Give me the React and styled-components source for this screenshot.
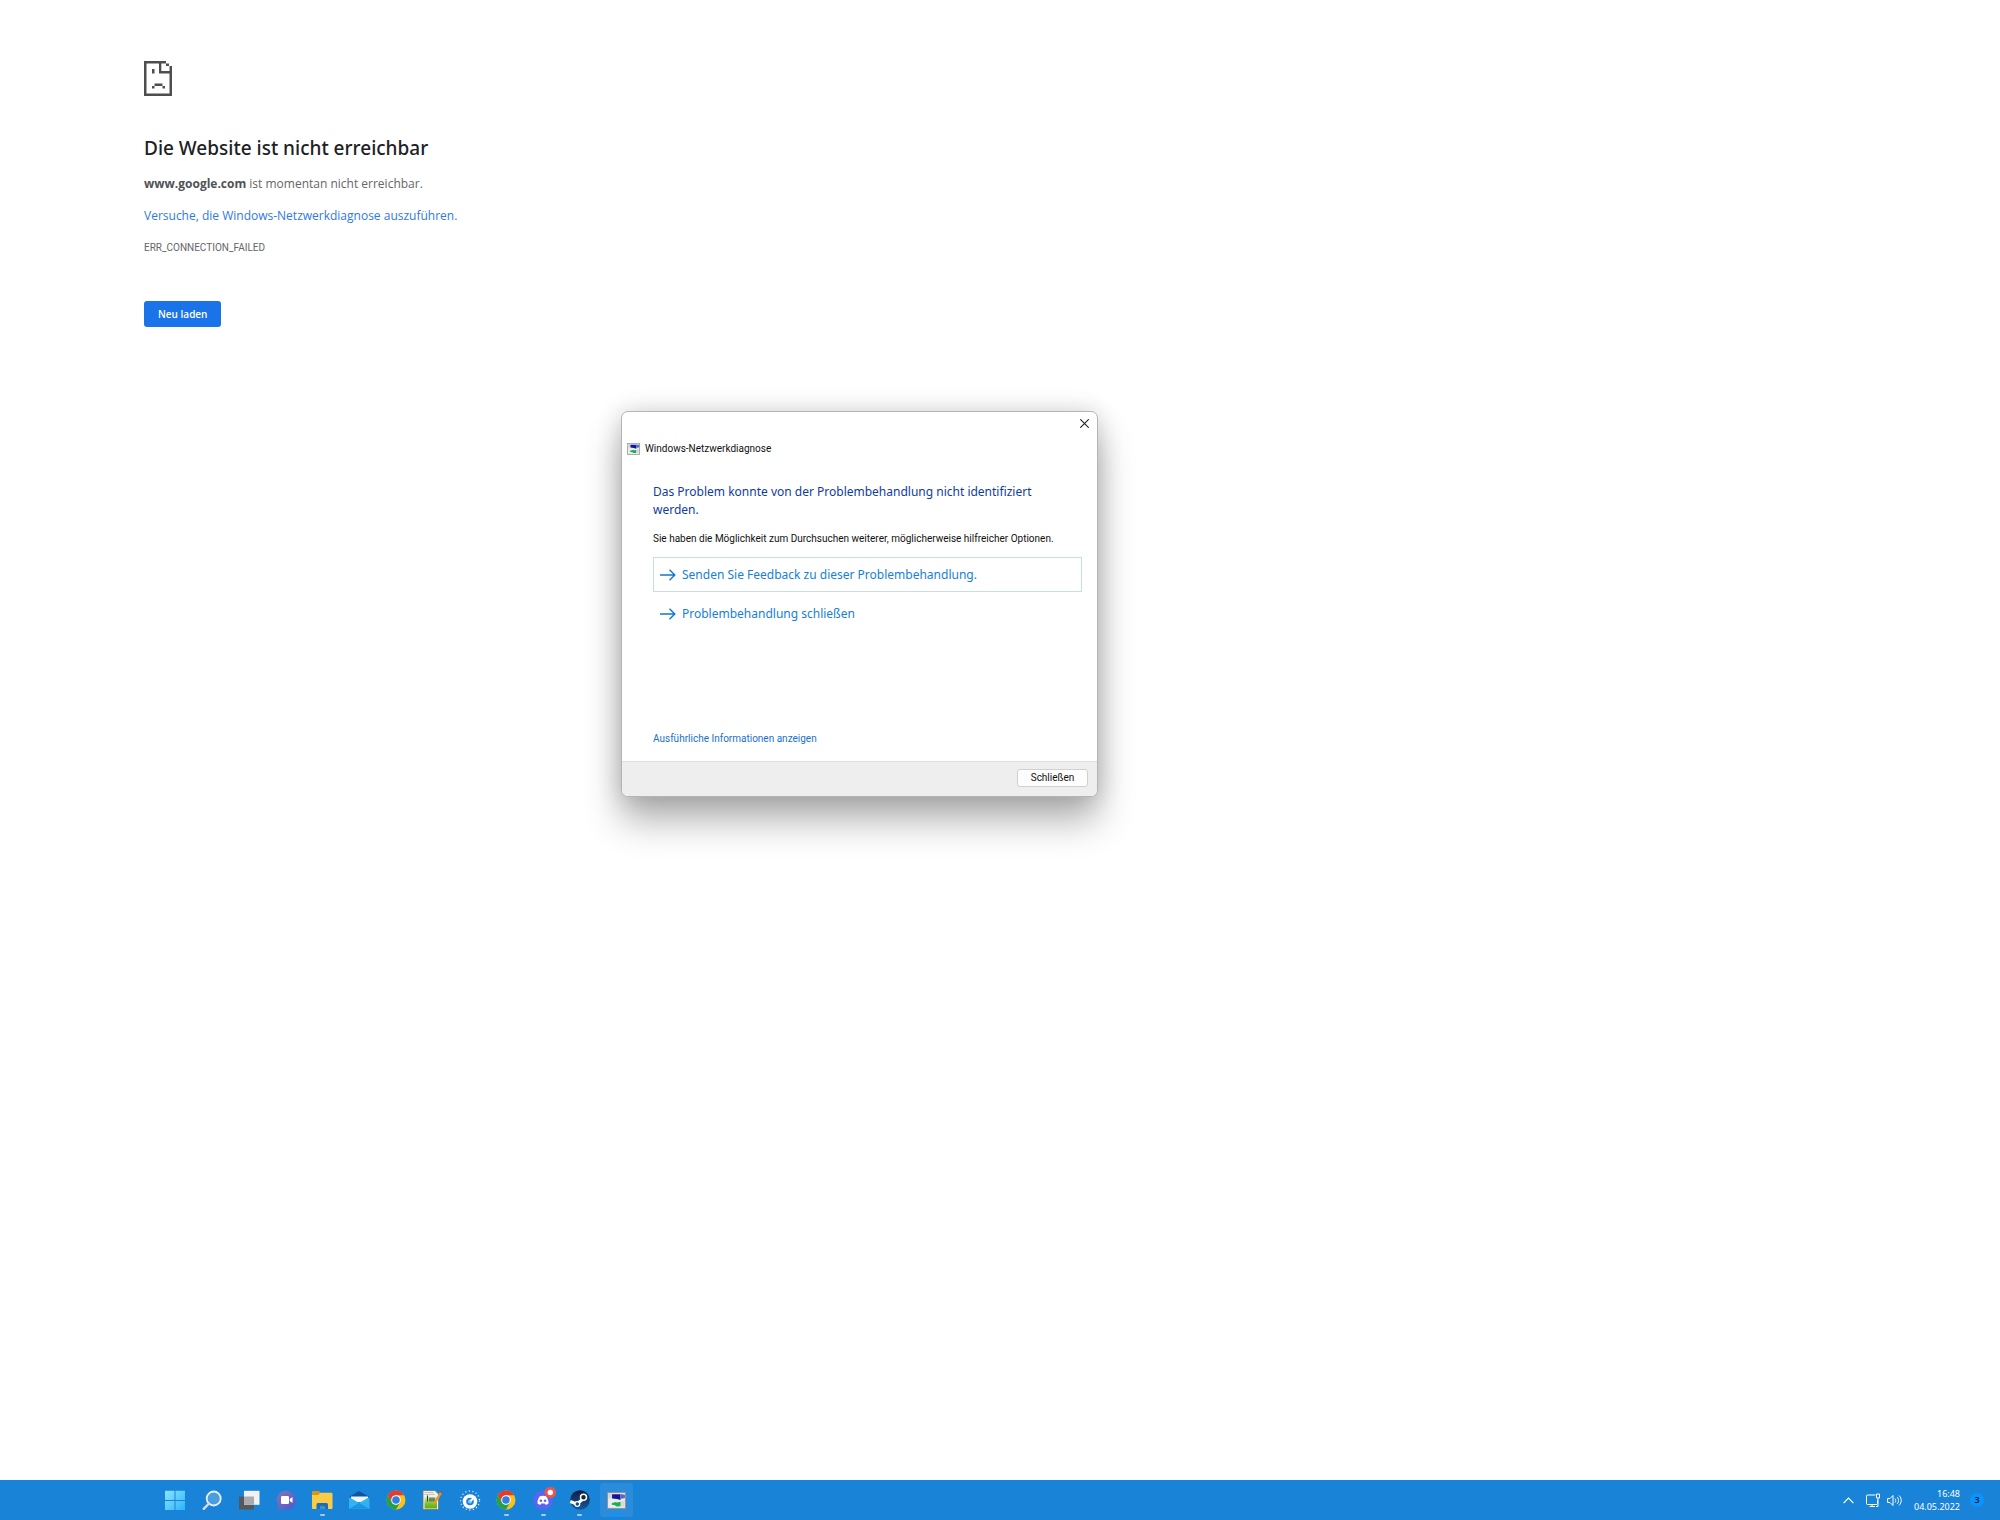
import React, { useState } from "react";
import styled, { createGlobalStyle } from "styled-components";

const GlobalStyle = createGlobalStyle`
  *, *::before, *::after { box-sizing: border-box; }
  body {
    margin: 0;
    background: #fff;
    font-family: "Open Sans", "Noto Sans", sans-serif;
  }
  h1, h2, p { margin: 0; }
  button { font-family: inherit; cursor: pointer; }
  a { text-decoration: none; }
`;

const Desktop = styled.div`
  min-height: 100vh;
  display: flex;
  flex-direction: column;
  position: relative;
`;

/* ---------- browser error page ---------- */

const ErrorPage = styled.main`
  flex: 1;
  display: flex;
  flex-direction: column;
  align-items: flex-start;
  padding: 61px 144px;
`;

const SadPage = styled.svg`
  width: 28px;
  height: 35px;
  margin-bottom: 38px;
`;

const ErrorTitle = styled.h1`
  font-family: "Noto Sans", sans-serif;
  font-size: 19px;
  line-height: 28px;
  font-weight: 500;
  color: #202124;
  margin-bottom: 12px;
`;

const ErrorText = styled.p`
  font-size: 12px;
  line-height: 20px;
  color: #646669;
  margin-bottom: 12px;

  strong { color: #505256; }
`;

const DiagnoseLink = styled.a`
  color: #2f78e8;
`;

const ErrorCode = styled.p`
  font-family: Roboto, "Noto Sans", sans-serif;
  font-size: 10px;
  line-height: 20px;
  color: #646669;
  margin-bottom: 43px;
`;

const ReloadButton = styled.button`
  height: 26px;
  padding: 0 14px;
  border: 0;
  border-radius: 3px;
  background: #1a73e8;
  color: #fff;
  font-size: 10px;
  font-weight: 600;
  line-height: 16px;
`;

/* ---------- diagnosis window ---------- */

const Dialog = styled.section`
  position: absolute;
  top: 411px;
  left: 621px;
  width: 477px;
  min-height: 386px;
  display: flex;
  flex-direction: column;
  border: 1px solid #b4b4b4;
  border-radius: 7px;
  background: #fff;
  font-family: Roboto, "Noto Sans", sans-serif;
  font-size: 10px;
  line-height: 16px;
  overflow: hidden;
  box-shadow: 0 24px 36px rgba(0, 0, 0, 0.3), 0 0 24px rgba(0, 0, 0, 0.16);
`;

const TitleBar = styled.div`
  display: flex;
  justify-content: flex-end;
`;

const CloseButton = styled.button`
  display: flex;
  align-items: center;
  justify-content: center;
  width: 26px;
  height: 23px;
  padding: 0;
  border: 0;
  background: transparent;
`;

const DialogCaption = styled.div`
  display: flex;
  align-items: center;
  gap: 5px;
  height: 28px;
  padding: 0 5px;
  color: #111;
`;

const DialogBody = styled.div`
  flex: 1;
  display: flex;
  flex-direction: column;
  align-items: flex-start;
  padding: 20px 15px 14px 31px;
`;

const DialogHeading = styled.h2`
  padding-right: 24px;
  font-family: "Noto Sans", sans-serif;
  font-size: 12px;
  line-height: 18px;
  font-weight: 400;
  color: #0f3c9e;
  margin-bottom: 12px;
`;

const DialogText = styled.p`
  color: #111;
  margin-bottom: 10px;
`;

const Command = styled.button`
  display: flex;
  align-items: center;
  gap: 6px;
  width: 100%;
  height: 35px;
  padding: 0 6px;
  margin-bottom: 4px;
  border: 1px solid ${(p) => (p.$focused ? "#c5ddf3" : "transparent")};
  background: transparent;
  color: #1580d8;
  font-family: "Noto Sans", sans-serif;
  font-size: 12px;
  line-height: 18px;
  text-align: left;
`;

const DetailsLink = styled.a`
  margin-top: auto;
  color: #1a6fd0;
`;

const DialogFooter = styled.footer`
  display: flex;
  justify-content: flex-end;
  padding: 7px 9px 9px;
  border-top: 1px solid #dfdfdf;
  background: #eee;
`;

const FooterButton = styled.button`
  width: 71px;
  height: 18px;
  padding: 0;
  border: 1px solid #d0d0d0;
  border-radius: 3px;
  background: #fdfdfd;
  color: #111;
  font-size: 10px;
  line-height: 16px;
`;

/* ---------- taskbar ---------- */

const Taskbar = styled.nav`
  display: flex;
  align-items: center;
  justify-content: space-between;
  height: 40px;
  padding: 0 16px 0 157px;
  background: #1883d7;
`;

const AppStrip = styled.div`
  display: grid;
  grid-template-columns: repeat(13, 1fr);
  width: 478px;
`;

const AppButton = styled.button`
  position: relative;
  display: flex;
  align-items: center;
  justify-content: center;
  height: 34px;
  margin: 0 2px;
  padding: 0;
  border: 0;
  border-radius: 3px;
  background: ${(p) => (p.$active ? "#2a8cdb" : "transparent")};

  &::after {
    content: "";
    display: ${(p) => (p.$running || p.$active ? "block" : "none")};
    position: absolute;
    bottom: 1px;
    width: ${(p) => (p.$active ? "13px" : "5px")};
    height: 2px;
    border-radius: 1px;
    background: ${(p) => (p.$active ? "#0a94ff" : "#a5cdef")};
  }
`;

const AppIcon = styled.svg`
  width: 22px;
  height: 22px;
  overflow: visible;
`;

const Tray = styled.div`
  display: flex;
  align-items: center;
  color: #fff;
`;

const TrayButton = styled.button`
  display: flex;
  padding: 0;
  margin-right: ${(p) => p.$gap}px;
  border: 0;
  background: transparent;
  color: inherit;
`;

const Clock = styled.time`
  display: flex;
  flex-direction: column;
  align-items: flex-end;
  margin-right: 10px;
  font-family: "Noto Sans", sans-serif;
  font-size: 9px;
  line-height: 13px;
`;

const CountBadge = styled.span`
  display: flex;
  align-items: center;
  justify-content: center;
  width: 14px;
  height: 14px;
  border-radius: 50%;
  background: #0a94ff;
  color: #06182c;
  font-size: 9px;
  font-weight: 600;
  line-height: 12px;
`;

/* ---------- drawings ---------- */

const SadPageIcon = () => (
  <SadPage viewBox="0 0 28 35" fill="#4c4e50" aria-hidden="true">
    <path d="M0 0h22v2.500H2.500v30h23V12.500H15V2.500h2.300V10h8.200V5H28v30H0zM22 2.500h3V5h-3zM8 8h2.500v4.500H8zM10.500 22.500h8V25h-8zM8 25h2.500v2.500H8zM18.500 25H21v2.500h-2.500z" />
  </SadPage>
);

const ArrowIcon = () => (
  <svg width="16" height="14" viewBox="0 0 16 14" fill="none" stroke="#1178cf" strokeWidth="1.4" aria-hidden="true">
    <path d="M0 7h14.5M9.5 1.8 14.8 7l-5.300 5.200" />
  </svg>
);

const DiagnoseGlyph = ({ width, height }) => (
  <svg width={width} height={height} viewBox="0 0 18 16" aria-hidden="true">
    <rect x=".5" y=".5" width="17" height="15" fill="#ecebea" stroke="#8f9499" />
    <path d="M1 1h4v5H1z" fill="#d3d6da" />
    <path d="M4.800 2h8v5.500L9.500 6.500 4.800 6z" fill="#10169a" />
    <path d="M12.800 1.800 17 2.500v3.200l-4.200.8z" fill="#5568cc" />
    <path d="m4.500 10.500 3.500-1 1.500.4 3.500-.6v4.200l-4 .2-1.500-1.200-3-.4z" fill="#16b352" />
    <path d="M13 8.500h3.500v5H13z" fill="#d5dcd8" />
  </svg>
);

const StartIcon = () => (
  <AppIcon viewBox="0 0 22 22">
    <defs>
      <linearGradient id="start" x1="0" y1="0" x2="1" y2="1">
        <stop offset="0" stopColor="#8fe3ff" />
        <stop offset="1" stopColor="#2bb4fb" />
      </linearGradient>
    </defs>
    <path fill="url(#start)" d="M1 1.800h9.500v9.200H1zM11.500 1.800H21v9.200h-9.500zM1 12h9.500v9H1zM11.500 12H21v9h-9.500z" />
  </AppIcon>
);

const SearchIcon = () => (
  <AppIcon viewBox="0 0 22 22" fill="none">
    <circle cx="12.700" cy="9.500" r="7" fill="#4a9ee0" stroke="#e9eef2" strokeWidth="1.800" />
    <path d="m8 14.500-5.300 5.300" stroke="#d5dce2" strokeWidth="2.400" strokeLinecap="round" />
  </AppIcon>
);

const TaskViewIcon = () => (
  <AppIcon viewBox="0 0 22 22">
    <path d="M1 7.500h15V20.500H1z" fill="#55585b" />
    <path d="M6 1.800h15.500v14H6z" fill="#f1f2f3" />
    <path d="M6 7.500h10v8.300H6z" fill="#a9acaf" />
  </AppIcon>
);

const ChatIcon = () => (
  <AppIcon viewBox="0 0 22 22">
    <defs>
      <linearGradient id="chat" x1="0" y1="0" x2="1" y2="1">
        <stop offset="0" stopColor="#8277b8" />
        <stop offset="1" stopColor="#5055cf" />
      </linearGradient>
    </defs>
    <path d="M11.500 1.800a9.400 9.400 0 1 1-4 17.900L2 21l1-5a9.400 9.400 0 0 1 8.500-14.200z" fill="url(#chat)" />
    <rect x="6" y="7" width="8" height="8" rx="1.200" fill="#fff" />
    <path d="m14.700 10 2.800-2v6l-2.800-2z" fill="#fff" />
  </AppIcon>
);

const ExplorerIcon = () => (
  <AppIcon viewBox="0 0 22 22">
    <path d="M1 3a1 1 0 0 1 1-1h6l2 2.500h-2L7 7H1z" fill="#d89614" />
    <path d="M9 3.800h11.500a1 1 0 0 1 1 1V19a1 1 0 0 1-1 1H2a1 1 0 0 1-1-1V6h6z" fill="#fbcb45" />
    <path d="M5.500 20v-4.500a1.500 1.500 0 0 1 1.500-1.500h8.500a1.500 1.500 0 0 1 1.500 1.500V20h-3.500v-2H9v2z" fill="#1a6fb8" />
    <path d="M9 17h4.500v3H9z" fill="#3d8fd0" />
  </AppIcon>
);

const MailIcon = () => (
  <AppIcon viewBox="0 0 22 22">
    <path d="M1 8 11 2l10.500 6v3H1z" fill="#0f549f" />
    <path d="M3 7.500h17V13H3z" fill="#eef5fa" />
    <path d="M1 8v11a1 1 0 0 0 1 1h18.500a1 1 0 0 0 1-1V8L11 14z" fill="#2fb3f2" />
    <path d="M1.300 19.800 11 14l10.200 5.800z" fill="#1b94e4" />
  </AppIcon>
);

const ChromeIcon = () => (
  <AppIcon viewBox="0 0 22 22">
    <circle cx="11" cy="11" r="9.500" fill="#fbc116" />
    <path d="M2.770 6.250A9.500 9.500 0 0 1 19.230 6.250H11L6.900 13.400z" fill="#e33b2e" />
    <path d="M2.770 6.250A9.500 9.500 0 0 0 11 20.500l4.100-7.100L11 15.700 6.900 13.400z" fill="#22a04b" />
    <circle cx="11" cy="11" r="4.800" fill="#fff" />
    <circle cx="11" cy="11" r="3.800" fill="#2f7de9" />
  </AppIcon>
);

const NotepadIcon = () => (
  <AppIcon viewBox="0 0 22 22">
    <defs>
      <linearGradient id="note" x1="0" y1="0" x2="0" y2="1">
        <stop offset="0" stopColor="#dcebc0" />
        <stop offset=".6" stopColor="#7cc02a" />
        <stop offset="1" stopColor="#5fae14" />
      </linearGradient>
    </defs>
    <path d="M1 1.500h12L16.500 5v15.500H1z" fill="#f1f2ee" stroke="#6c7468" strokeWidth=".8" />
    <path d="M2.500 8h12.500v11.500H2.500z" fill="url(#note)" />
    <path d="M2.500 3.500h9M2.500 5.500h10" stroke="#b3b8b0" strokeWidth=".8" />
    <path d="M5.500 6.500v6M8 8.500v4M10 8.500v4M12 8.500v4" stroke="#33432a" strokeWidth="1.100" />
    <path d="M18.300 2.500 12 12.500l-.6 3.500 2.900-2.200L20 4z" fill="#e69a2b" />
    <path d="m17.800 3.300 1-1.500 1.700 1.200-1 1.600z" fill="#a6543a" />
  </AppIcon>
);

const DialIcon = () => (
  <AppIcon viewBox="0 0 22 22" fill="none">
    <circle cx="11" cy="11.500" r="9.500" stroke="#d8ebfa" strokeWidth="1.300" strokeDasharray="1.200 2.400" />
    <circle cx="11" cy="12.500" r="7.300" fill="#fff" />
    <circle cx="11" cy="12.500" r="2.900" stroke="#1883d7" strokeWidth="1.800" fill="#8cc2ec" />
    <path d="m11.500 12 4-4" stroke="#fff" strokeWidth="2" />
  </AppIcon>
);

const DiscordIcon = () => (
  <AppIcon viewBox="0 0 22 22">
    <circle cx="11" cy="11.300" r="9.800" fill="#5865f2" />
    <path d="M7.800 7.200c2-.7 4.400-.7 6.400 0 1.600 2.200 2.500 4.600 2.300 7.200-1 .8-2 1.200-3 1.400l-.8-1.300H9.300l-.8 1.300c-1-.2-2-.6-3-1.400-.2-2.600.7-5 2.300-7.200z" fill="#fff" />
    <circle cx="8.900" cy="11.700" r="1.300" fill="#5865f2" />
    <circle cx="13.100" cy="11.700" r="1.300" fill="#5865f2" />
    <circle cx="18.300" cy="3.500" r="5.800" fill="#ef5350" />
    <circle cx="18.300" cy="3.500" r="2.700" fill="#fff" />
  </AppIcon>
);

const SteamIcon = () => (
  <AppIcon viewBox="0 0 22 22">
    <defs>
      <linearGradient id="steam" x1="0" y1="0" x2="0" y2="1">
        <stop offset="0" stopColor="#111c3d" />
        <stop offset="1" stopColor="#145a9b" />
      </linearGradient>
    </defs>
    <circle cx="11" cy="11" r="9.800" fill="url(#steam)" />
    <path d="M1.300 12.500 7.500 15l5.500-4 .5-4" fill="none" stroke="#fff" strokeWidth="3" />
    <circle cx="14.500" cy="8.300" r="3" fill="#16264a" stroke="#fff" strokeWidth="1.500" />
    <circle cx="8.300" cy="15" r="2.400" fill="#174c86" stroke="#fff" strokeWidth="1.300" />
  </AppIcon>
);

const DiagnoseIcon = () => <DiagnoseGlyph width="19" height="17" />;

const apps = [
  { name: "Start", Icon: StartIcon },
  { name: "Suche", Icon: SearchIcon },
  { name: "Aktive Anwendungen", Icon: TaskViewIcon },
  { name: "Chat", Icon: ChatIcon },
  { name: "Explorer", Icon: ExplorerIcon, running: true },
  { name: "Mail", Icon: MailIcon },
  { name: "Chrome", Icon: ChromeIcon },
  { name: "Notepad++", Icon: NotepadIcon },
  { name: "Monitor", Icon: DialIcon },
  { name: "Chrome-Fenster", Icon: ChromeIcon, running: true },
  { name: "Discord", Icon: DiscordIcon, running: true },
  { name: "Steam", Icon: SteamIcon, running: true },
  { name: "Windows-Netzwerkdiagnose", Icon: DiagnoseIcon, active: true },
];

function DiagnoseWindow({ onClose }) {
  return (
    <Dialog role="dialog" aria-labelledby="diagnose-caption">
      <TitleBar>
        <CloseButton aria-label="Fenster schließen" onClick={onClose}>
          <svg width="9" height="9" viewBox="0 0 9 9" stroke="#222" strokeWidth="1.100" aria-hidden="true">
            <path d="m.3.300 8.400 8.400M8.700.3.300 8.700" />
          </svg>
        </CloseButton>
      </TitleBar>
      <DialogCaption>
        <DiagnoseGlyph width="13" height="12" />
        <span id="diagnose-caption">Windows-Netzwerkdiagnose</span>
      </DialogCaption>
      <DialogBody>
        <DialogHeading>
          Das Problem konnte von der Problembehandlung nicht identifiziert werden.
        </DialogHeading>
        <DialogText>
          Sie haben die Möglichkeit zum Durchsuchen weiterer, möglicherweise hilfreicher Optionen.
        </DialogText>
        <Command $focused>
          <ArrowIcon />
          Senden Sie Feedback zu dieser Problembehandlung.
        </Command>
        <Command onClick={onClose}>
          <ArrowIcon />
          Problembehandlung schließen
        </Command>
        <DetailsLink href="#details">Ausführliche Informationen anzeigen</DetailsLink>
      </DialogBody>
      <DialogFooter>
        <FooterButton onClick={onClose}>Schließen</FooterButton>
      </DialogFooter>
    </Dialog>
  );
}

export default function App() {
  const [open, setOpen] = useState(true);

  return (
    <Desktop>
      <GlobalStyle />
      <ErrorPage>
        <SadPageIcon />
        <ErrorTitle>Die Website ist nicht erreichbar</ErrorTitle>
        <ErrorText>
          <strong>www.google.com</strong> ist momentan nicht erreichbar.
        </ErrorText>
        <ErrorText>
          <DiagnoseLink href="#diagnose">Versuche, die Windows-Netzwerkdiagnose auszuführen.</DiagnoseLink>
        </ErrorText>
        <ErrorCode>ERR_CONNECTION_FAILED</ErrorCode>
        <ReloadButton>Neu laden</ReloadButton>
      </ErrorPage>

      {open && <DiagnoseWindow onClose={() => setOpen(false)} />}

      <Taskbar>
        <AppStrip>
          {apps.map(({ name, Icon, running, active }) => (
            <AppButton key={name} aria-label={name} $running={running} $active={active}>
              <Icon />
            </AppButton>
          ))}
        </AppStrip>
        <Tray>
          <TrayButton $gap={12} aria-label="Ausgeblendete Symbole">
            <svg width="11" height="7" viewBox="0 0 11 7" fill="none" stroke="currentColor" strokeWidth="1.200">
              <path d="M.6 6.200 5.500 1l4.900 5.200" />
            </svg>
          </TrayButton>
          <TrayButton $gap={6} aria-label="Netzwerk">
            <svg width="15" height="15" viewBox="0 0 15 15" fill="none" stroke="currentColor">
              <path d="M9.500 2H1.500a1 1 0 0 0-1 1v7.500a1 1 0 0 0 1 1h9a1 1 0 0 0 1-1V7M3.500 13.500h5.500M6 11.500v2" />
              <path d="M10.500 1h3v4h-3zM12 5v8.500h-2" />
            </svg>
          </TrayButton>
          <TrayButton $gap={12} aria-label="Lautstärke">
            <svg width="15" height="13" viewBox="0 0 15 13" fill="none" stroke="currentColor">
              <path d="M.6 4.500H3L6 1.500v10L3 8.500H.6zM8 4.500c1 1.200 1 2.800 0 4M10 3c2 2 2 5 0 7M12 1.500c3 3 3 7 0 10" />
            </svg>
          </TrayButton>
          <Clock dateTime="2022-05-04T16:48">
            <span>16:48</span>
            <span>04.05.2022</span>
          </Clock>
          <CountBadge>3</CountBadge>
        </Tray>
      </Taskbar>
    </Desktop>
  );
}
